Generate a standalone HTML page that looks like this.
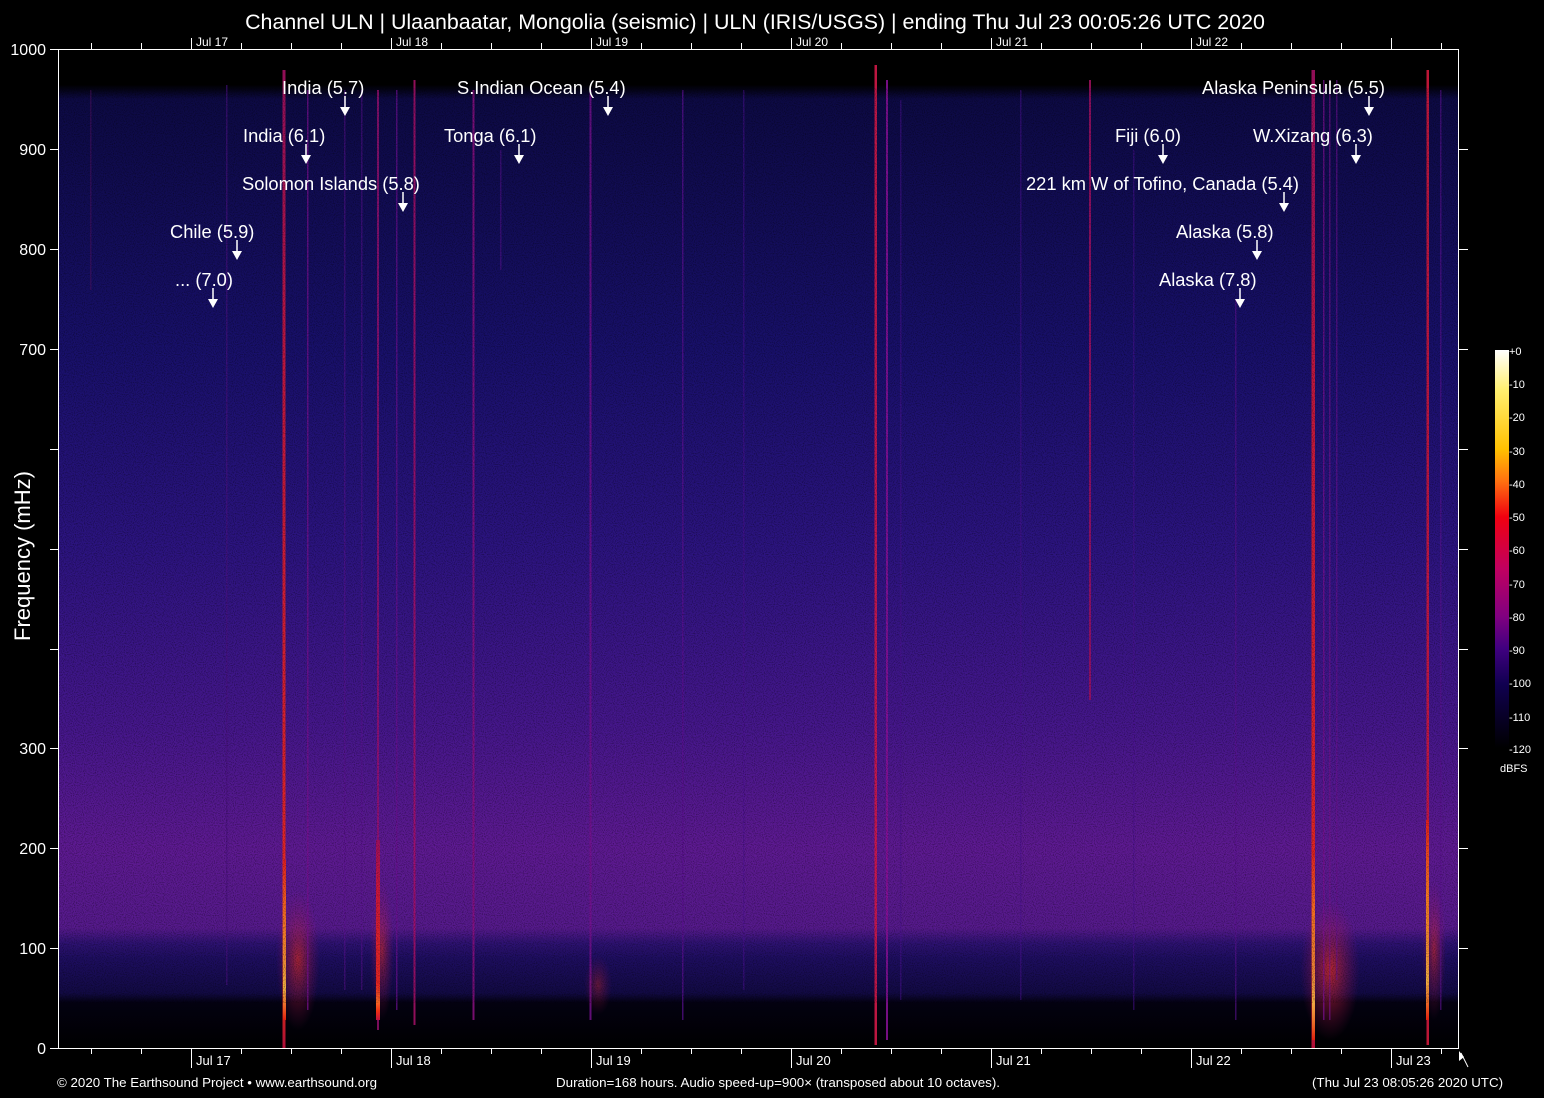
<!DOCTYPE html>
<html><head><meta charset="utf-8"><style>
html,body{margin:0;padding:0;background:#000;}
svg{display:block}
text{font-family:"Liberation Sans",Arial,sans-serif;fill:#fff}
</style></head><body>
<svg width="1544" height="1098" viewBox="0 0 1544 1098" xmlns="http://www.w3.org/2000/svg">
<defs>
<linearGradient id="bg" x1="0" y1="0" x2="0" y2="1">
<stop offset="0" stop-color="#000"/>
<stop offset="0.036" stop-color="#000"/>
<stop offset="0.05" stop-color="#0d0a44"/>
<stop offset="0.3" stop-color="#18106a"/>
<stop offset="0.5" stop-color="#2c1480"/>
<stop offset="0.68" stop-color="#46178c"/>
<stop offset="0.8" stop-color="#5e1a92"/>
<stop offset="0.88" stop-color="#561a8c"/>
<stop offset="0.895" stop-color="#2e1272"/>
<stop offset="0.91" stop-color="#1e0e60"/>
<stop offset="0.945" stop-color="#120a44"/>
<stop offset="0.955" stop-color="#030110"/>
<stop offset="1" stop-color="#000"/>
</linearGradient>
<linearGradient id="red" x1="0" y1="0" x2="0" y2="1">
<stop offset="0" stop-color="#a01060"/>
<stop offset="0.3" stop-color="#d0183a"/>
<stop offset="0.8" stop-color="#f02818"/>
<stop offset="0.9" stop-color="#ff7020"/>
<stop offset="0.95" stop-color="#f03010"/>
<stop offset="1" stop-color="#c01040"/>
</linearGradient>
<linearGradient id="yel" x1="0" y1="0" x2="0" y2="1">
<stop offset="0" stop-color="#e02020"/>
<stop offset="0.5" stop-color="#ff9a20"/>
<stop offset="0.8" stop-color="#ffd040"/>
<stop offset="1" stop-color="#e02010"/>
</linearGradient>
<linearGradient id="cb" x1="0" y1="0" x2="0" y2="1">
<stop offset="0" stop-color="#ffffff"/>
<stop offset="0.1" stop-color="#fff070"/>
<stop offset="0.25" stop-color="#ffc000"/>
<stop offset="0.33" stop-color="#ff7010"/>
<stop offset="0.42" stop-color="#f00010"/>
<stop offset="0.55" stop-color="#c00060"/>
<stop offset="0.67" stop-color="#800080"/>
<stop offset="0.75" stop-color="#400080"/>
<stop offset="0.84" stop-color="#100050"/>
<stop offset="1" stop-color="#000"/>
</linearGradient>
<radialGradient id="glow">
<stop offset="0" stop-color="#f03020" stop-opacity="0.9"/>
<stop offset="1" stop-color="#a01060" stop-opacity="0"/>
</radialGradient>
<filter id="noise" x="0" y="0" width="100%" height="100%">
<feTurbulence type="fractalNoise" baseFrequency="0.9" numOctaves="1" seed="3"/>
<feColorMatrix values="0 0 0 0 0  0 0 0 0 0  0 0 0 0 0  0 0 0 -2.2 1.25"/>
</filter>
</defs>

<rect x="58" y="49" width="1400" height="999" fill="url(#bg)"/>

<g>
<rect x="90" y="90" width="1.5" height="200" fill="#501060" opacity="0.5"/>
<rect x="226" y="85" width="1.5" height="900" fill="#4a1080" opacity="0.6"/>
<rect x="282.5" y="70" width="3" height="978" fill="url(#red)" opacity="0.9"/>
<rect x="283" y="860" width="3" height="160" fill="url(#yel)"/>
<ellipse cx="298" cy="960" rx="22" ry="70" fill="url(#glow)" opacity="0.7"/>
<rect x="307" y="90" width="1.5" height="920" fill="#7a1090" opacity="0.7"/>
<rect x="344" y="90" width="1.5" height="900" fill="#5a1090" opacity="0.5"/>
<rect x="361" y="90" width="1.5" height="900" fill="#5a1090" opacity="0.5"/>
<rect x="377" y="90" width="2" height="940" fill="#9a1070" opacity="0.8"/>
<rect x="376" y="840" width="4" height="180" fill="url(#red)"/>
<ellipse cx="382" cy="950" rx="12" ry="70" fill="url(#glow)" opacity="0.6"/>
<rect x="396" y="90" width="1.5" height="920" fill="#6a1090" opacity="0.7"/>
<rect x="413.5" y="80" width="2" height="945" fill="#a81068" opacity="0.85"/>
<rect x="472.5" y="90" width="2" height="930" fill="#8a1080" opacity="0.85"/>
<rect x="500" y="150" width="1.5" height="120" fill="#5a1090" opacity="0.5"/>
<rect x="589.5" y="90" width="2" height="930" fill="#781090" opacity="0.8"/>
<ellipse cx="598" cy="985" rx="14" ry="30" fill="url(#glow)" opacity="0.4"/>
<rect x="682" y="90" width="1.5" height="930" fill="#5a1090" opacity="0.7"/>
<rect x="743" y="90" width="1.5" height="900" fill="#4a1090" opacity="0.5"/>
<rect x="874.5" y="65" width="2.5" height="980" fill="#d01848" opacity="0.9"/>
<rect x="886" y="80" width="2" height="960" fill="#8a1098" opacity="0.85"/>
<rect x="900" y="100" width="1.5" height="900" fill="#4a1090" opacity="0.5"/>
<rect x="1020" y="90" width="1.5" height="910" fill="#4a1090" opacity="0.5"/>
<rect x="1089" y="80" width="2" height="620" fill="#a01060" opacity="0.85"/>
<rect x="1133" y="150" width="1.5" height="860" fill="#4a1090" opacity="0.5"/>
<rect x="1235" y="300" width="1.5" height="720" fill="#5a1090" opacity="0.6"/>
<rect x="1311.5" y="70" width="3.5" height="978" fill="url(#red)" opacity="0.9"/>
<rect x="1312" y="850" width="3" height="190" fill="url(#yel)"/>
<ellipse cx="1330" cy="970" rx="30" ry="70" fill="url(#glow)" opacity="0.8"/>
<rect x="1323" y="80" width="1.5" height="940" fill="#7a1090" opacity="0.7"/>
<rect x="1329" y="80" width="1.5" height="940" fill="#7a1090" opacity="0.6"/>
<rect x="1336" y="80" width="1.5" height="900" fill="#6a1090" opacity="0.6"/>
<rect x="1426.5" y="70" width="2.5" height="975" fill="#d0183c" opacity="0.9"/>
<rect x="1426" y="820" width="3" height="200" fill="url(#yel)"/>
<ellipse cx="1434" cy="950" rx="12" ry="70" fill="url(#glow)" opacity="0.6"/>
<rect x="1440" y="90" width="1.5" height="920" fill="#5a1090" opacity="0.6"/>
</g>

<rect x="58" y="88" width="1400" height="915" filter="url(#noise)" opacity="0.45"/>

<g stroke="#fff" stroke-width="1" fill="none">
<path d="M58.5 49V1048.5H1458.5V49M50 49.5H1458.5"/>
<path d="M50 149.5h8M50 249.5h8M50 349.5h8M50 449.5h8M50 549.5h8M50 649.5h8M50 748.5h8M50 848.5h8M50 948.5h8M50 1048.5h8"/>
<path d="M1458 149.5h10M1458 249.5h10M1458 349.5h10M1458 449.5h10M1458 549.5h10M1458 649.5h10M1458 748.5h10M1458 848.5h10M1458 948.5h10"/>
<path d="M91.5 1048v6M141.5 1048v6M241.5 1048v6M291.5 1048v6M341.5 1048v6M441.5 1048v6M491.5 1048v6M541.5 1048v6M641.5 1048v6M691.5 1048v6M741.5 1048v6M841.5 1048v6M891.5 1048v6M941.5 1048v6M1041.5 1048v6M1091.5 1048v6M1141.5 1048v6M1241.5 1048v6M1291.5 1048v6M1341.5 1048v6M1441.5 1048v6"/>
<path d="M191.5 1048v20M391.5 1048v20M591.5 1048v20M791.5 1048v20M991.5 1048v20M1191.5 1048v20M1391.5 1048v20"/>
<path d="M91.5 49v-6M141.5 49v-6M241.5 49v-6M291.5 49v-6M341.5 49v-6M441.5 49v-6M491.5 49v-6M541.5 49v-6M641.5 49v-6M691.5 49v-6M741.5 49v-6M841.5 49v-6M891.5 49v-6M941.5 49v-6M1041.5 49v-6M1091.5 49v-6M1141.5 49v-6M1241.5 49v-6M1291.5 49v-6M1341.5 49v-6M1441.5 49v-6"/>
<path d="M191.5 49v-11M391.5 49v-11M591.5 49v-11M791.5 49v-11M991.5 49v-11M1191.5 49v-11M1391.5 49v-11"/>
<path d="M1461 1053l7 14"/>
</g>
<path d="M1459 1051l0 10 5-4z" fill="#fff"/>

<text x="755" y="29" font-size="21.4" text-anchor="middle">Channel ULN | Ulaanbaatar, Mongolia (seismic) | ULN (IRIS/USGS) | ending Thu Jul 23 00:05:26 UTC 2020</text>

<g font-size="16" text-anchor="end">
<text x="46" y="55">1000</text>
<text x="46" y="155">900</text>
<text x="46" y="255">800</text>
<text x="46" y="355">700</text>
<text x="46" y="754">300</text>
<text x="46" y="854">200</text>
<text x="46" y="954">100</text>
<text x="46" y="1054">0</text>
</g>
<text transform="translate(30,556) rotate(-90)" font-size="22" text-anchor="middle">Frequency (mHz)</text>

<g font-size="12">
<text x="196" y="46">Jul 17</text><text x="396" y="46">Jul 18</text><text x="596" y="46">Jul 19</text><text x="796" y="46">Jul 20</text><text x="996" y="46">Jul 21</text><text x="1196" y="46">Jul 22</text>
</g>
<g font-size="13">
<text x="196" y="1065">Jul 17</text><text x="396" y="1065">Jul 18</text><text x="596" y="1065">Jul 19</text><text x="796" y="1065">Jul 20</text><text x="996" y="1065">Jul 21</text><text x="1196" y="1065">Jul 22</text><text x="1396" y="1065">Jul 23</text>
</g>

<g font-size="13">
<text x="57" y="1087" textLength="320" lengthAdjust="spacingAndGlyphs">© 2020 The Earthsound Project • www.earthsound.org</text>
<text x="556" y="1087" textLength="444" lengthAdjust="spacingAndGlyphs">Duration=168 hours. Audio speed-up=900× (transposed about 10 octaves).</text>
<text x="1312" y="1087" textLength="191" lengthAdjust="spacingAndGlyphs">(Thu Jul 23 08:05:26 2020 UTC)</text>
</g>

<g font-size="18.3">
<text x="282" y="94">India (5.7)</text>
<text x="243" y="142">India (6.1)</text>
<text x="242" y="190">Solomon Islands (5.8)</text>
<text x="170" y="238">Chile (5.9)</text>
<text x="175" y="286">... (7.0)</text>
<text x="457" y="94">S.Indian Ocean (5.4)</text>
<text x="444" y="142">Tonga (6.1)</text>
<text x="1115" y="142">Fiji (6.0)</text>
<text x="1253" y="142">W.Xizang (6.3)</text>
<text x="1202" y="94">Alaska Peninsula (5.5)</text>
<text x="1026" y="190">221 km W of Tofino, Canada (5.4)</text>
<text x="1176" y="238">Alaska (5.8)</text>
<text x="1159" y="286">Alaska (7.8)</text>
</g>
<g stroke="#fff" stroke-width="1.5">
<path d="M345 96v12M306 144v12M403 192v12M237 240v12M213 288v12M608 96v12M519 144v12M1163 144v12M1356 144v12M1369 96v12M1284 192v12M1257 240v12M1240 288v12"/>
</g>
<g fill="#fff">
<path d="M340 107h10l-5 9z"/><path d="M301 155h10l-5 9z"/><path d="M398 203h10l-5 9z"/><path d="M232 251h10l-5 9z"/><path d="M208 299h10l-5 9z"/>
<path d="M603 107h10l-5 9z"/><path d="M514 155h10l-5 9z"/><path d="M1158 155h10l-5 9z"/><path d="M1351 155h10l-5 9z"/><path d="M1364 107h10l-5 9z"/>
<path d="M1279 203h10l-5 9z"/><path d="M1252 251h10l-5 9z"/><path d="M1235 299h10l-5 9z"/>
</g>

<rect x="1495" y="350" width="14" height="398" fill="url(#cb)"/>
<g font-size="11">
<text x="1509" y="355">+0</text>
<text x="1509" y="388">-10</text>
<text x="1509" y="421">-20</text>
<text x="1509" y="455">-30</text>
<text x="1509" y="488">-40</text>
<text x="1509" y="521">-50</text>
<text x="1509" y="554">-60</text>
<text x="1509" y="588">-70</text>
<text x="1509" y="621">-80</text>
<text x="1509" y="654">-90</text>
<text x="1509" y="687">-100</text>
<text x="1509" y="721">-110</text>
<text x="1509" y="753">-120</text>
<text x="1500" y="772">dBFS</text>
</g>
</svg>
</body></html>
